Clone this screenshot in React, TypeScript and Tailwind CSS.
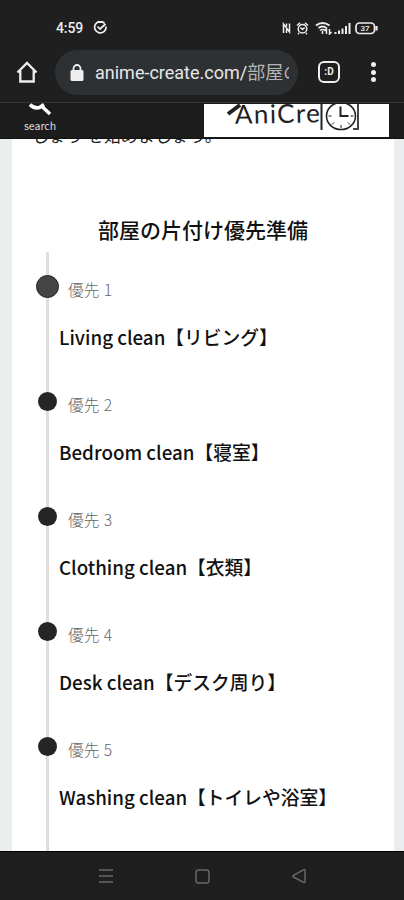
import React from "react";

const cjk = "font-['Noto_Sans_CJK_JP','Noto_Sans',sans-serif]";

const steps = [
  { label: "優先 1", title: "Living clean【リビング】" },
  { label: "優先 2", title: "Bedroom clean【寝室】" },
  { label: "優先 3", title: "Clothing clean【衣類】" },
  { label: "優先 4", title: "Desk clean【デスク周り】" },
  { label: "優先 5", title: "Washing clean【トイレや浴室】" },
];

function StatusBar() {
  return (
    <div className="flex h-[50px] items-center pt-[5px] text-[#eee]">
      <span className="ml-[56px] w-[28px] whitespace-nowrap font-[Roboto,sans-serif] text-[14px] font-medium leading-none tracking-[-0.1px]">4:59</span>
      <svg className="ml-[9px]" width="15" height="14" viewBox="0 0 15 14" fill="none" stroke="currentColor" strokeWidth="1.7">
        <path d="M11.500 2.300A5.700 5.700 0 1 0 13 5.500M4.500 5.500 7 8l5.500-5M4 1.200h6.500" />
      </svg>
      <svg className="ml-[174px]" width="98" height="14" viewBox="0 0 98 14" fill="none" stroke="currentColor" strokeWidth="1.5">
        <path d="M1.500 12V3l6 8V2.500M4.500 12V8M4.500 2.500v3" strokeWidth="1.5" />
        <circle cx="20.500" cy="7.800" r="4.300" />
        <path d="M15 4.500l3-2.700M26 4.500l-3-2.700M18.300 6.500l2.200 2 2.200-2M17 12l-1 1.300M24 12l1 1.300" />
        <path d="M34 4.500q6.500-5 13.500 0M36.500 7q4-3 8 0" strokeWidth="2" />
        <path d="M38 9.500q2.500-1.800 5 0M40.500 10v3M44.500 13V8l-2 2M47.500 8v5l2-2" strokeWidth="1.5" />
        <path d="M53.500 11v2M57 9.500V13M60.500 7.500V13M64 5V13M67.500 2v11" strokeWidth="2" />
        <rect x="74" y="2" width="18.500" height="10.500" rx="3.500" strokeWidth="1.7" />
        <path d="M94.500 5v4.500" strokeWidth="2.200" />
        <text x="78.500" y="10" fontSize="8" fontFamily="Roboto" fontWeight="500" fill="currentColor" stroke="none">37</text>
      </svg>
    </div>
  );
}

function AddressBar() {
  return (
    <div className="flex h-[52px] items-start">
      <svg className="ml-[16px] mt-[10px] shrink-0" width="22" height="24" viewBox="0 0 22 24" fill="none" stroke="#eee" strokeWidth="2.3">
        <path d="M1.500 12.500 11 3l9.500 9.500M4.300 10.500v11h13.400v-11" />
      </svg>
      <div className="ml-[17px] flex h-[45px] w-[243px] shrink-0 items-center rounded-full bg-[#2e3133]">
        <svg className="ml-[15px] shrink-0" width="14" height="18" viewBox="0 0 14 18">
          <rect x="0.500" y="6" width="13" height="11" rx="1.500" fill="#eee" />
          <path d="M3.500 7V4.500a3.500 3.500 0 0 1 7 0V7" fill="none" stroke="#eee" strokeWidth="1.800" />
        </svg>
        <div className="ml-[11px] w-[194px] overflow-hidden whitespace-nowrap font-[Roboto,'Noto_Sans_CJK_JP',sans-serif] text-[18px] leading-[26px] text-[#e6e6e6]">
          anime-create.com/<span className="text-[#b5b5b5]">部屋の</span>
        </div>
      </div>
      <div className="ml-[20px] mt-[11px] flex h-[22px] w-[22px] shrink-0 items-center justify-center rounded-[6px] border-[2.5px] border-[#eee] font-[Roboto,sans-serif] text-[10px] font-bold leading-none text-[#eee]">:D</div>
      <div className="ml-[31px] mt-[12px] flex flex-col gap-[2.5px]">
        <i className="size-[5px] rounded-full bg-[#eee]" />
        <i className="size-[5px] rounded-full bg-[#eee]" />
        <i className="size-[5px] rounded-full bg-[#eee]" />
      </div>
    </div>
  );
}

function SiteHeader() {
  return (
    <div className="flex h-[36px] shrink-0 border-b border-[#111] bg-[#1c1c1c]">
      <div className="flex w-[80px] flex-col items-center">
        <svg width="24" height="14" viewBox="0 0 24 14" fill="none" stroke="#fff" strokeWidth="3.6">
          <path d="M2 1.500q4 4.500 9.500 3L16 1.500M14 3.500l8 7.500" />
        </svg>
        <span className="mt-[2px] text-[10.500px] leading-[14px] text-[#ddd]">search</span>
      </div>
      <div className="ml-[124px] mt-px h-[33px] w-[185px] overflow-hidden bg-white">
        <svg width="185" height="33" viewBox="0 0 185 33" fill="none" stroke="#222" strokeWidth="2">
          <path d="M24 10 36 1" strokeWidth="4" />
          <text x="31" y="19" transform="rotate(-1 75 18)" fontFamily="Lato, sans-serif" fontSize="26" fill="#222" stroke="none" textLength="85" lengthAdjust="spacing">AniCre</text>
          <path d="M117.500 0v26" />
          <path d="M149 25h5V0" stroke="#444" />
          <ellipse cx="137" cy="12" rx="14.500" ry="13.500" strokeWidth="1.600" />
          <path d="M136.500 2.500v9.500h8" />
          <path d="M124.500 12h3M149.500 12h-3M137 24v-3M128 20.500l2-2M146 20.500l-2-2" strokeWidth="1" />
        </svg>
      </div>
    </div>
  );
}

export default function App() {
  return (
    <div className={`flex h-[900px] w-[404px] flex-col overflow-hidden bg-[#1f1f1f] ${cjk}`}>
      <StatusBar />
      <AddressBar />
      <div className="h-px shrink-0 bg-[#343434]" />
      <SiteHeader />
      <main className="h-[712px] shrink-0 overflow-hidden bg-[#ebeeef] pl-[12px] pr-[10px]">
        <div className="h-full bg-white">
          <div className="h-[60px] overflow-hidden">
            <p className="-mt-[17px] ml-[20px] text-[17px] leading-[26px] text-[#222]">しょう を始めましょう。</p>
          </div>
          <h1 className="ml-[86px] mt-[16px] whitespace-nowrap text-[21px] font-medium leading-[28px] text-[#111]">部屋の片付け優先準備</h1>
          <ol className="mt-[9px] ml-[34px] h-[610px] border-l-[3px] border-[#dedede] pt-[21px]">
            {steps.map((s, i) => (
              <li key={s.label} className="h-[115px]">
                <div className="flex h-[26px] items-center">
                  <i className={i === 0 ? "-ml-[13px] size-[23px] shrink-0 rounded-full border border-[#222] bg-[#444]" : "-ml-[11px] mr-[2px] size-[19px] shrink-0 rounded-full bg-[#252525]"} />
                  <span className="ml-[9px] mt-[8px] text-[15.700px] font-light leading-[24px] text-[#666] [word-spacing:1px]">{s.label}</span>
                </div>
                <h2 className="ml-[10px] mt-[24px] whitespace-nowrap text-[18.750px] font-medium leading-[28px] text-[#111]">{s.title}</h2>
              </li>
            ))}
          </ol>
        </div>
      </main>
      <nav className="flex h-[49px] shrink-0 items-start border-t border-black bg-[#1f1f1f]">
        <svg className="ml-[98px] mt-[16px]" width="210" height="16" viewBox="0 0 210 16" fill="none" stroke="#686868" strokeWidth="1.5">
          <path d="M1 2h14M1 8h14M1 14h14" />
          <rect x="98" y="2" width="13" height="13" rx="2.500" />
          <path d="M207 2.500v11q0 1.500-1.500.8L195.500 9q-1.300-.8 0-1.600l10-5.500q1.500-.8 1.500.6Z" />
        </svg>
      </nav>
    </div>
  );
}
